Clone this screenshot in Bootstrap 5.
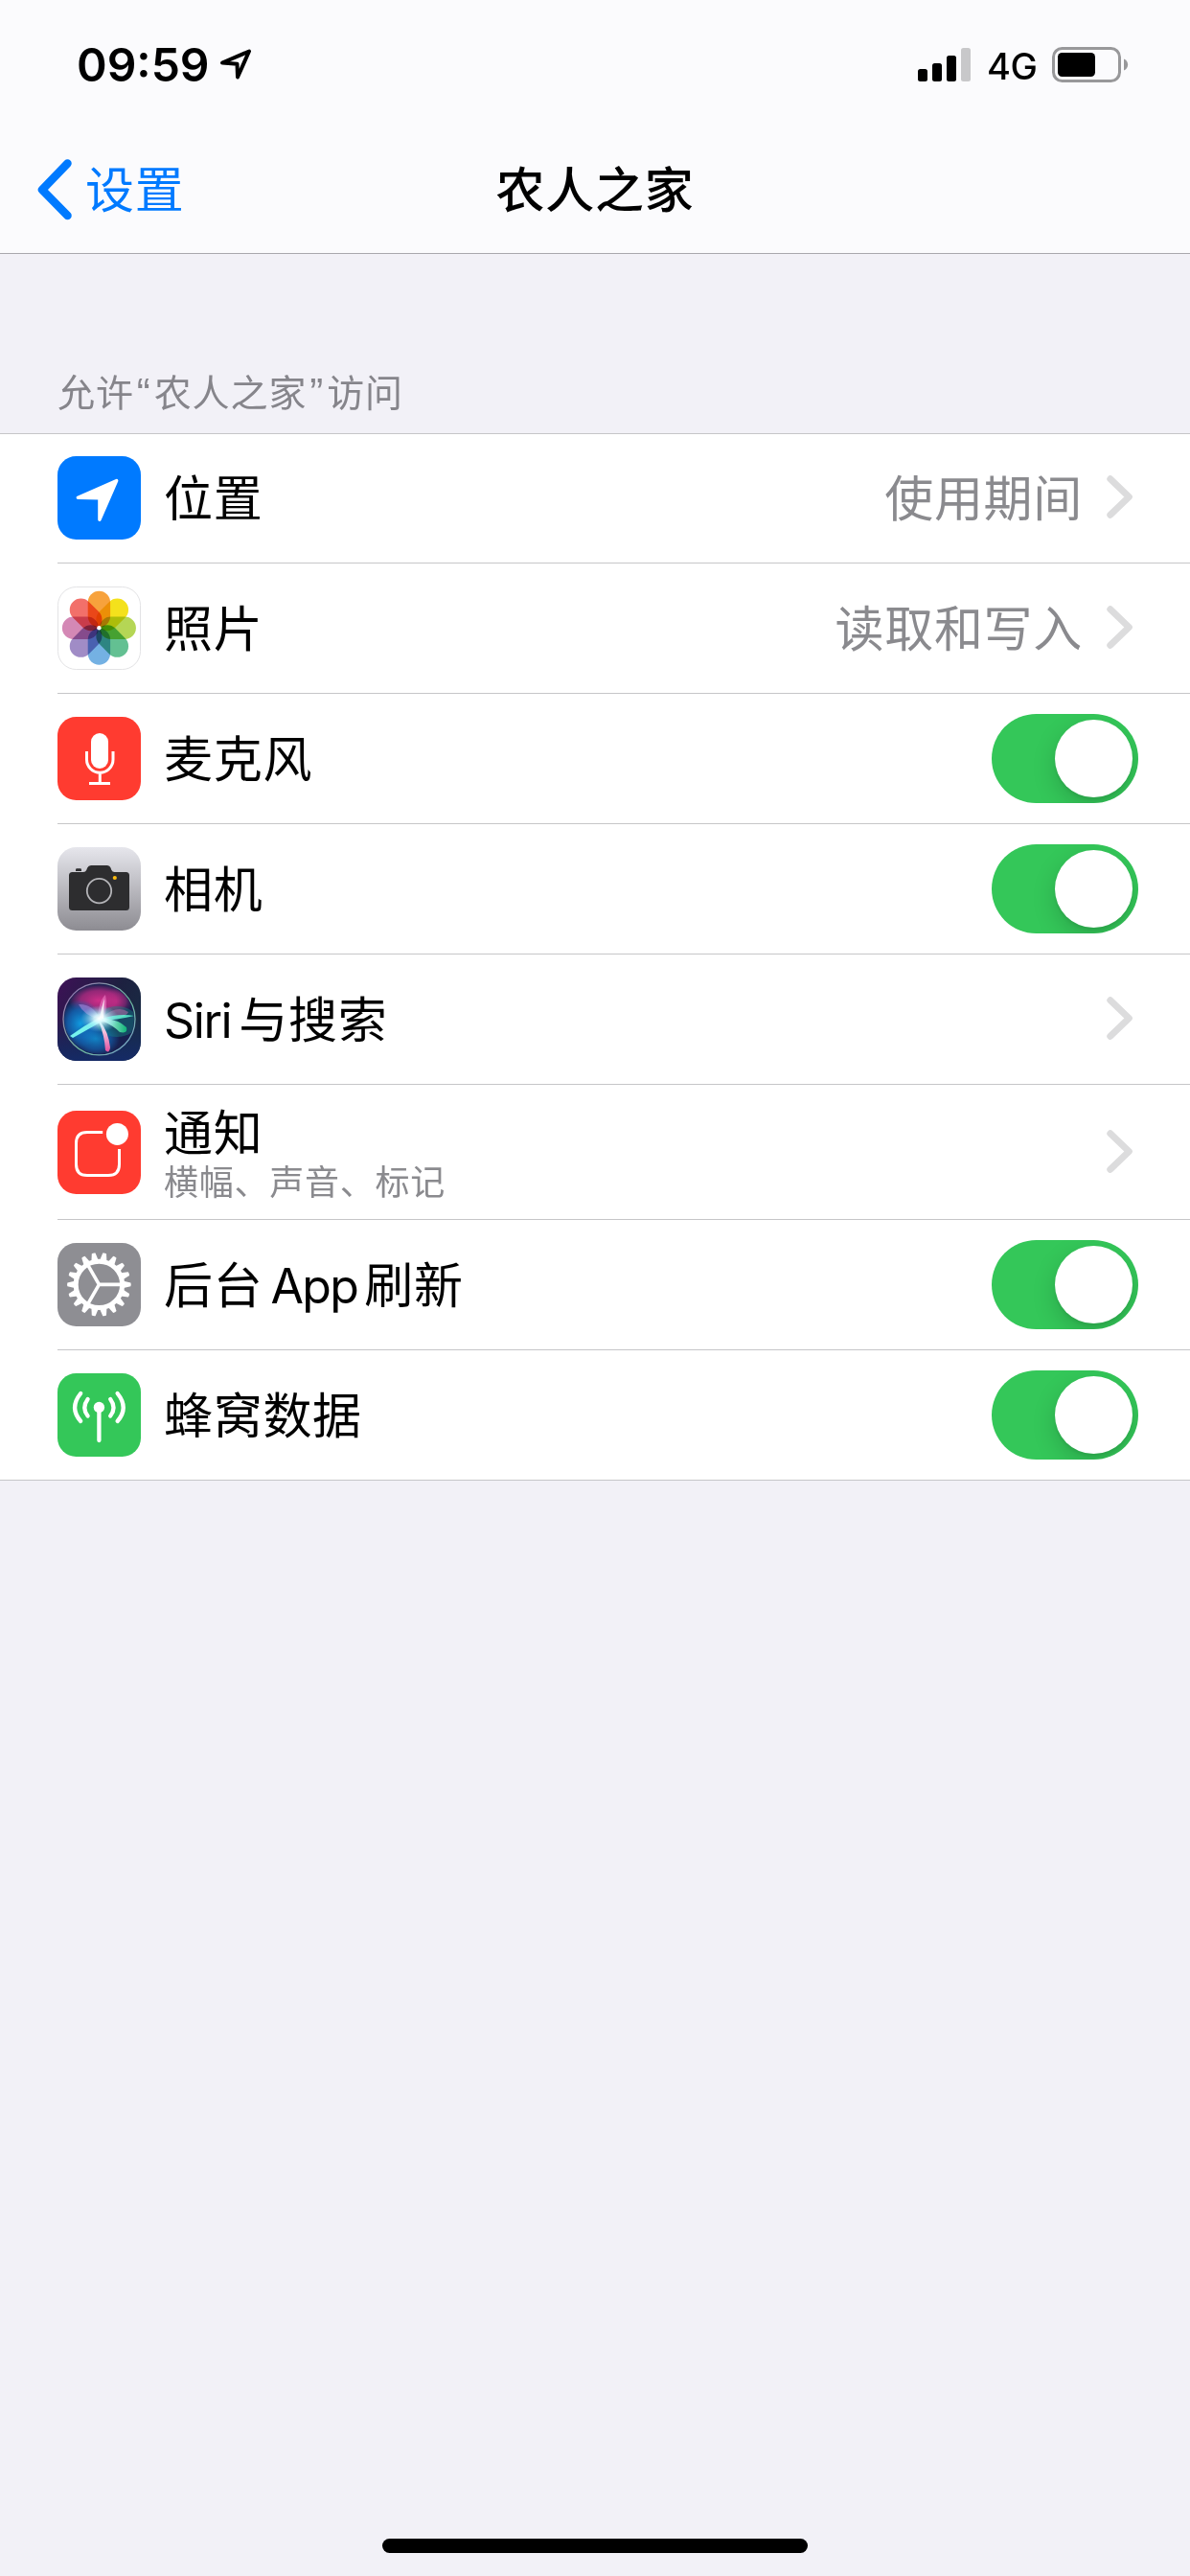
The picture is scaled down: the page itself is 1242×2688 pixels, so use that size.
<!DOCTYPE html>
<html lang="zh-CN">
<head>
  <meta charset="UTF-8" />
  <meta name="viewport" content="width=device-width, initial-scale=1.0"/>
  <title>农人之家</title>
  <link href="https://cdn.jsdelivr.net/npm/bootstrap@5.3.0/dist/css/bootstrap.min.css" rel="stylesheet"/>
  <style>
    body {
      background-color: #f2f1f7;
      color: #000;
      font-family: "Noto Sans CJK SC", sans-serif;
      font-size: 51px;
      line-height: 60px;
      letter-spacing: .7px;
      min-height: 2688px;
    }

    svg {
      display: block;
      flex: none;
    }

    .latin {
      font-family: Inter, "Noto Sans CJK SC", sans-serif;
    }

    /* Barra superior */
    .top-area {
      background-color: #fbfbfd;
      border-bottom: 1px solid #a9a8ad;
      height: 265px;
    }

    .status-bar {
      height: 132px;
      padding: 3px 64px 0 80px;
    }

    .clock {
      font-size: 48px;
      font-weight: 600;
      letter-spacing: 0;
      width: 150px;
    }

    .network {
      font-size: 38px;
      font-weight: 500;
      letter-spacing: -.5px;
      width: 68px;
      padding: 2px 0 0 16px;
    }

    .title-bar {
      height: 132px;
      padding: 0 39px;
    }

    .title-bar > * {
      flex: 1 1 0;
    }

    .back-link {
      color: #007aff;
      gap: 13px;
    }

    .page-title {
      font-size: 51px;
      font-weight: 500;
      line-height: 60px;
      text-align: center;
    }

    /* Lista */
    .section-title {
      color: #86858b;
      font-size: 39px;
      letter-spacing: .9px;
      line-height: 48px;
      height: 187px;
      padding: 0 60px 21px;
    }

    .quote {
      font-family: "Liberation Sans", sans-serif;
      font-size: 42px;
      line-height: 1px;
      margin: 0 3px;
    }

    .settings {
      border-top: 1px solid #c6c6c8;
      border-bottom: 1px solid #c6c6c8;
      background-color: #fff;
      border-radius: 0;
      padding-left: 60px;
    }

    .settings .list-group-item {
      height: 136px;
      padding: 0 54px 0 0;
      border: 0;
      border-bottom: 1px solid #c6c6c8;
      color: #000;
    }

    .settings .list-group-item:first-child {
      height: 135px;
      padding-bottom: 1px;
    }

    .settings .list-group-item:last-child {
      height: 135px;
      border-bottom: 0;
    }

    .settings .with-detail {
      height: 141px;
      padding-top: 1px;
    }

    .app-icon {
      width: 87px;
      height: 87px;
      margin-right: 24px;
    }

    /* El chino queda bajo en su caja, se sube 3px */
    .item-text {
      padding-bottom: 6px;
    }

    .item-text .latin {
      font-size: 50px;
      line-height: 1px;
    }

    .item-text .siri {
      letter-spacing: -1.4px;
      margin-right: 8px;
    }

    .item-text .app {
      letter-spacing: -1.6px;
      margin: 0 7px 0 8px;
    }

    .detail {
      color: #8a8a8e;
      font-size: 36px;
      letter-spacing: .75px;
      line-height: 44px;
    }

    .value {
      color: #8a8a8e;
      margin-right: 25px;
    }

    .chevron {
      margin: 0 6px 2px 0;
    }

    .form-switch {
      padding: 0;
      margin: 0;
      min-height: 0;
    }

    .form-switch .form-check-input {
      position: relative;
      float: none;
      display: block;
      width: 153px;
      height: 93px;
      margin: 0;
      border: 0;
      border-radius: 47px;
      background: #34c759;
      overflow: hidden;
    }

    .form-switch .form-check-input::after {
      content: "";
      position: absolute;
      top: 6px;
      right: 6px;
      width: 81px;
      height: 81px;
      border-radius: 50%;
      background: #fff;
      box-shadow: 0 9px 24px rgba(0, 0, 0, .17), 0 3px 3px rgba(0, 0, 0, .06);
    }

    .home-bar {
      width: 444px;
      height: 15px;
      margin-bottom: 24px;
      border-radius: 8px;
      background-color: #000;
    }

    .petals use {
      mix-blend-mode: multiply;
    }
  </style>
</head>
<body class="d-flex flex-column">

  <header class="top-area">
    <div class="status-bar d-flex align-items-center">
      <span class="clock latin">09:59</span>
      <svg width="33" height="33" viewBox="0 0 33 33" fill="none" stroke="#000" stroke-width="4" stroke-linejoin="round"><path d="M2 14.5 30 2.5 18 29.5 17.5 15.8Z"/></svg>
      <svg class="ms-auto" width="56" height="36" viewBox="0 0 56 36">
        <rect y="22" width="10" height="13" rx="2.5"/>
        <rect x="15" y="16" width="10" height="19" rx="2.5"/>
        <rect x="30" y="8" width="10" height="27" rx="2.5"/>
        <rect x="45" width="10" height="35" rx="2.5" fill="#c8c8ca"/>
      </svg>
      <span class="network latin">4G</span>
      <svg class="ms-3" width="80" height="37" viewBox="0 0 80 37">
        <rect x="1.5" y="1.5" width="69" height="34" rx="9" fill="none" stroke="#98989a" stroke-width="3"/>
        <rect x="6" y="6" width="39" height="25" rx="4.5"/>
        <path d="M75 12.5C80.5 14.5 80.5 22.5 75 24.5Z" fill="#98989a"/>
      </svg>
    </div>
    <nav class="title-bar d-flex align-items-center">
      <a href="#" class="back-link d-flex align-items-center text-decoration-none">
        <svg width="37" height="64" viewBox="0 0 37 64" fill="none" stroke="#007aff" stroke-width="8.5" stroke-linecap="round" stroke-linejoin="round"><path d="M31.5 4.5 5 32 31.5 59"/></svg>
        <span class="item-text">设置</span>
      </a>
      <h1 class="page-title item-text mb-0">农人之家</h1>
      <span></span>
    </nav>
  </header>

  <main>
    <div class="section-title d-flex align-items-end"><span>允许<span class="quote">“</span>农人之家<span class="quote">”</span>访问</span></div>

    <ul class="list-group list-group-flush settings">
      <li class="list-group-item d-flex align-items-center">
        <svg class="app-icon" viewBox="0 0 87 87">
          <rect width="87" height="87" rx="19.5" fill="#007aff"/>
          <path d="M21.3 43.3 61.7 25.6 43.9 66.3V43.8Z" fill="#fff" stroke="#fff" stroke-width="3.4" stroke-linejoin="round"/>
        </svg>
        <span class="item-text">位置</span>
        <span class="value item-text ms-auto">使用期间</span>
        <svg class="chevron" width="27" height="45" viewBox="0 0 27 45" fill="none" stroke="#dcdcdd" stroke-width="7" stroke-linecap="round" stroke-linejoin="round"><path d="M3.8 3.8 23.3 22.5 3.8 41.3"/></svg>
      </li>
      <li class="list-group-item d-flex align-items-center">
        <svg class="app-icon" viewBox="0 0 87 87">
          <defs>
            <rect id="petal" x="-11.7" y="-38.5" width="23.4" height="38" rx="11.7"/>
          </defs>
          <rect x=".5" y=".5" width="86" height="86" rx="19" fill="#fff" stroke="#e3e3e5"/>
          <g class="petals" transform="translate(43.4 43.2)">
            <use href="#petal" fill="#f7a23c"/>
            <use href="#petal" fill="#f4e11c" transform="rotate(45)"/>
            <use href="#petal" fill="#b5d655" transform="rotate(90)"/>
            <use href="#petal" fill="#63c092" transform="rotate(135)"/>
            <use href="#petal" fill="#74b1e3" transform="rotate(180)"/>
            <use href="#petal" fill="#a08cc6" transform="rotate(225)"/>
            <use href="#petal" fill="#d488b5" transform="rotate(270)"/>
            <use href="#petal" fill="#f2706a" transform="rotate(315)"/>
          </g>
          <circle cx="43.4" cy="43.2" r="2.2" fill="#fff"/>
        </svg>
        <span class="item-text">照片</span>
        <span class="value item-text ms-auto">读取和写入</span>
        <svg class="chevron" width="27" height="45" viewBox="0 0 27 45" fill="none" stroke="#dcdcdd" stroke-width="7" stroke-linecap="round" stroke-linejoin="round"><path d="M3.8 3.8 23.3 22.5 3.8 41.3"/></svg>
      </li>
      <li class="list-group-item d-flex align-items-center">
        <svg class="app-icon" viewBox="0 0 87 87">
          <rect width="87" height="87" rx="19.5" fill="#ff3b30"/>
          <rect x="35" y="17" width="18" height="37" rx="9" fill="#fff"/>
          <path d="M30.5 36v8.5a13.7 13.7 0 0 0 27.5 0V36M44.3 58.5V69.5M33 69.5H55" fill="none" stroke="#fff" stroke-width="3"/>
        </svg>
        <span class="item-text">麦克风</span>
        <div class="form-check form-switch ms-auto"><input class="form-check-input" type="checkbox" role="switch" aria-label="麦克风" checked></div>
      </li>
      <li class="list-group-item d-flex align-items-center">
        <svg class="app-icon" viewBox="0 0 87 87">
          <defs>
            <linearGradient id="silver" x2="0" y2="1"><stop stop-color="#e6e6ec"/><stop offset="1" stop-color="#8d8c92"/></linearGradient>
          </defs>
          <rect width="87" height="87" rx="19.5" fill="url(#silver)"/>
          <path d="M19 25V23.5Q19 22.3 20.2 22.3H23.8Q25 22.3 25 23.5V25Z" fill="#2d2d2f"/>
          <path d="M15.5 26H27Q29.3 26 30.3 23.8L31.2 21.5Q32.3 19 35 19H52Q54.5 19 55.5 21.5L56.3 23.8Q57.3 26 59.5 26H71.5Q75 26 75 29.5V62.5Q75 66 71.5 66H15.5Q12 66 12 62.5V29.5Q12 26 15.5 26Z" fill="#2d2d2f"/>
          <circle cx="43.5" cy="45.6" r="12.7" fill="none" stroke="#b4b4b8" stroke-width="1.8"/>
          <circle cx="59.8" cy="32" r="2.1" fill="#fdbd10"/>
        </svg>
        <span class="item-text">相机</span>
        <div class="form-check form-switch ms-auto"><input class="form-check-input" type="checkbox" role="switch" aria-label="相机" checked></div>
      </li>
      <li class="list-group-item d-flex align-items-center">
        <svg class="app-icon" viewBox="0 0 87 87">
          <defs>
            <linearGradient id="siriBg" x2="1" y2=".6"><stop stop-color="#3e1157"/><stop offset=".6" stop-color="#1d2140"/><stop offset="1" stop-color="#182c44"/></linearGradient>
            <linearGradient id="siriLow" x2="0" y2="1"><stop offset=".5" stop-color="#152a66" stop-opacity="0"/><stop offset="1" stop-color="#152a66"/></linearGradient>
            <linearGradient id="siriRing" x2="1" y2="1"><stop stop-color="#a06bb5"/><stop offset=".6" stop-color="#6fbda0"/><stop offset="1" stop-color="#7c9ad0"/></linearGradient>
            <radialGradient id="siriPink" cx=".5" cy=".5" r=".5"><stop stop-color="#e2308f"/><stop offset=".6" stop-color="#c32b86" stop-opacity=".8"/><stop offset="1" stop-color="#c32b86" stop-opacity="0"/></radialGradient>
            <radialGradient id="siriBlue" cx=".5" cy=".5" r=".5"><stop stop-color="#109be0"/><stop offset=".6" stop-color="#1268b8" stop-opacity=".8"/><stop offset="1" stop-color="#1268b8" stop-opacity="0"/></radialGradient>
            <radialGradient id="siriGlow" cx=".5" cy=".5" r=".5"><stop stop-color="#fff"/><stop offset=".3" stop-color="#d8fbff" stop-opacity=".9"/><stop offset="1" stop-color="#6fd8f5" stop-opacity="0"/></radialGradient>
            <linearGradient id="siriLeg" x2="0" y2="1"><stop stop-color="#fff"/><stop offset="1" stop-color="#e0509f"/></linearGradient>
            <linearGradient id="siriArm"><stop stop-color="#d8fff8"/><stop offset="1" stop-color="#0fb377"/></linearGradient>
            <clipPath id="siriClip"><circle cx="43.5" cy="43.4" r="36.5"/></clipPath>
          </defs>
          <rect width="87" height="87" rx="19.5" fill="url(#siriBg)"/>
          <rect width="87" height="87" rx="19.5" fill="url(#siriLow)"/>
          <circle cx="43.5" cy="43.4" r="37" fill="#182050"/>
          <g clip-path="url(#siriClip)">
            <ellipse cx="43" cy="24" rx="31" ry="17" fill="url(#siriPink)" opacity=".9"/>
            <ellipse cx="61" cy="25" rx="17" ry="14" fill="url(#siriPink)" opacity=".5"/>
            <ellipse cx="24" cy="48" rx="22" ry="25" fill="url(#siriBlue)"/>
            <ellipse cx="40" cy="64" rx="25" ry="18" fill="url(#siriBlue)" opacity=".8"/>
            <ellipse cx="62" cy="46" rx="22" ry="16" fill="#138d84" opacity=".4"/>
            <path d="M44 42Q36 27 22 28Q27 39 44 44Z" fill="#a989dc" opacity=".6"/>
            <path d="M42 44Q43 24 50 18Q53 31 48 44Z" fill="#ee7ac4" opacity=".6"/>
            <path d="M46 42Q62 28 74 36Q70 44 46 44Z" fill="#a06aa0" opacity=".65"/>
            <path d="M46 43Q64 37 80 40Q64 44 46 45Z" fill="#5fffd8" opacity=".8"/>
            <path d="M46 42Q64 44 72 52Q74 59 65 57Q58 50 46 45Z" fill="url(#siriArm)"/>
            <path d="M44 45Q53 56 55 73Q54 80 50 76Q49 60 43 46Z" fill="url(#siriLeg)"/>
            <path d="M45 41Q28 50 13 61L16 63Q32 54 48 45Z" fill="#76f3ed"/>
            <ellipse cx="44" cy="43" rx="20" ry="14" fill="url(#siriGlow)"/>
            <path d="M44 42Q46 30 49 22L48 43Z" fill="#fff" opacity=".75"/>
          </g>
          <circle cx="43.5" cy="43.4" r="37.5" fill="none" stroke="url(#siriRing)" stroke-width="1.3"/>
        </svg>
        <span class="item-text"><span class="latin siri">Siri</span>与搜索</span>
        <svg class="chevron ms-auto" width="27" height="45" viewBox="0 0 27 45" fill="none" stroke="#dcdcdd" stroke-width="7" stroke-linecap="round" stroke-linejoin="round"><path d="M3.8 3.8 23.3 22.5 3.8 41.3"/></svg>
      </li>
      <li class="list-group-item with-detail d-flex align-items-center">
        <svg class="app-icon" viewBox="0 0 87 87">
          <rect width="87" height="87" rx="19.5" fill="#ff3b30"/>
          <path d="M47.2 22.6H31Q19.5 22.6 19.5 34V56Q19.5 67.5 31 67.5H53Q64.5 67.5 64.5 56V40" fill="none" stroke="#fff" stroke-width="3"/>
          <circle cx="62.4" cy="24.4" r="11.5" fill="#fff"/>
        </svg>
        <div class="d-flex flex-column pb-1">
          <span>通知</span>
          <span class="detail">横幅、声音、标记</span>
        </div>
        <svg class="chevron ms-auto" width="27" height="45" viewBox="0 0 27 45" fill="none" stroke="#dcdcdd" stroke-width="7" stroke-linecap="round" stroke-linejoin="round"><path d="M3.8 3.8 23.3 22.5 3.8 41.3"/></svg>
      </li>
      <li class="list-group-item d-flex align-items-center">
        <svg class="app-icon" viewBox="0 0 87 87">
          <defs>
            <path id="tooth" d="M25.5-3.6 33-1.9Q33.7 0 33 1.9L25.5 3.6Z"/>
            <g id="teeth">
              <use href="#tooth"/>
              <use href="#tooth" transform="rotate(20)"/>
              <use href="#tooth" transform="rotate(40)"/>
            </g>
          </defs>
          <rect width="87" height="87" rx="19.5" fill="#8e8e93"/>
          <g transform="translate(43.4 43.4)" fill="#fff">
            <use href="#teeth"/>
            <use href="#teeth" transform="rotate(60)"/>
            <use href="#teeth" transform="rotate(120)"/>
            <use href="#teeth" transform="rotate(180)"/>
            <use href="#teeth" transform="rotate(240)"/>
            <use href="#teeth" transform="rotate(300)"/>
            <circle r="24.2" fill="none" stroke="#fff" stroke-width="5"/>
            <path d="M0 0H23M0 0-11.5-20M0 0-11.5 20" fill="none" stroke="#fff" stroke-width="3.6"/>
          </g>
        </svg>
        <span class="item-text">后台<span class="latin app">App</span>刷新</span>
        <div class="form-check form-switch ms-auto"><input class="form-check-input" type="checkbox" role="switch" aria-label="后台 App 刷新" checked></div>
      </li>
      <li class="list-group-item d-flex align-items-center">
        <svg class="app-icon" viewBox="0 0 87 87">
          <rect width="87" height="87" rx="19.5" fill="#34c759"/>
          <circle cx="43.4" cy="35.5" r="5.7" fill="#fff"/>
          <path d="M43.4 36V70M31.6 27Q25 36 31.6 44.5M24.2 21Q12 36 24.2 50M55.2 27Q61.8 36 55.2 44.5M62.6 21Q74.8 36 62.6 50" fill="none" stroke="#fff" stroke-width="4.3" stroke-linecap="round"/>
        </svg>
        <span class="item-text">蜂窝数据</span>
        <div class="form-check form-switch ms-auto"><input class="form-check-input" type="checkbox" role="switch" aria-label="蜂窝数据" checked></div>
      </li>
    </ul>
  </main>

  <div class="home-bar mt-auto mx-auto"></div>

  <script src="https://cdn.jsdelivr.net/npm/bootstrap@5.3.0/dist/js/bootstrap.bundle.min.js"></script>
</body>
</html>
